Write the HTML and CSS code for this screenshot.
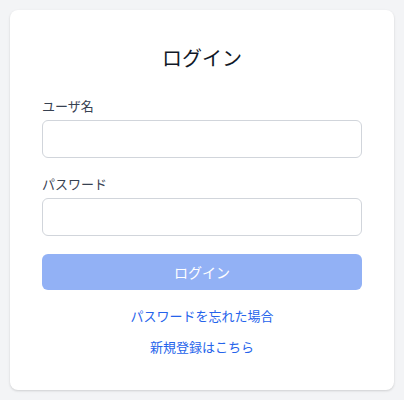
FILE: index.html
```html
<!DOCTYPE html>
<html lang="ja">
<head>
<meta charset="utf-8">
<title>ログイン</title>
<link rel="stylesheet" href="styles.css">
</head>
<body>
<main class="card">
  <h1 class="title">ログイン</h1>
  <form class="form">
    <div class="field">
      <label class="label" for="username">ユーザ名</label>
      <input class="input" id="username" type="text">
    </div>
    <div class="field">
      <label class="label" for="password">パスワード</label>
      <input class="input" id="password" type="password">
    </div>
    <button class="button" type="button" disabled>ログイン</button>
  </form>
  <div class="links">
    <a class="link" href="#">パスワードを忘れた場合</a>
    <a class="link" href="#">新規登録はこちら</a>
  </div>
</main>
</body>
</html>
```
FILE: styles.css
```css
* { box-sizing: border-box; }
html, body { margin: 0; }
body {
  background: #f3f4f6;
  padding: 10px;
  font-family: "Noto Sans CJK JP", "Noto Sans", sans-serif;
  color: #1f2937;
}
.card {
  background: #ffffff;
  border-radius: 8px;
  box-shadow: 0 1px 3px rgba(0,0,0,0.1), 0 1px 2px rgba(0,0,0,0.06);
  padding: 32px 32px 33px;
  width: 384px;
}
.title {
  margin: 2px 0 24px;
  font-size: 20px;
  line-height: 28px;
  font-weight: 400;
  text-align: center;
  color: #111827;
}
.form {
  display: flex;
  flex-direction: column;
  gap: 16px;
}
.field {
  display: flex;
  flex-direction: column;
  gap: 4px;
}
.label {
  font-size: 13px;
  line-height: 20px;
  color: #374151;
}
.input {
  height: 38px;
  width: 100%;
  border: 1px solid #d1d5db;
  border-radius: 6px;
  background: #fff;
  font: inherit;
  padding: 0 12px;
}
.button {
  height: 36px;
  width: 100%;
  border: none;
  border-radius: 6px;
  background: #92b1f5;
  color: #ffffff;
  font-family: inherit;
  font-size: 14px;
  margin-top: 2px;
}
.links {
  display: flex;
  flex-direction: column;
  align-items: center;
  gap: 11px;
  margin-top: 16px;
}
.link {
  font-size: 13px;
  line-height: 20px;
  color: #2563eb;
  text-decoration: none;
}
```
